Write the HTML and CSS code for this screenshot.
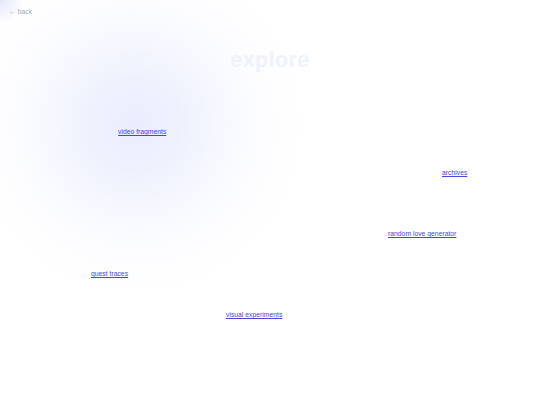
FILE: index.html
```html
<!DOCTYPE html>
<html>
<head>
<meta charset="utf-8">
<link rel="stylesheet" href="styles.css">
</head>
<body>
<div class="page">
  <div class="glow"></div>
  <div class="corner"></div>
  <a class="back" href="#">← back</a>
  <h1 class="title">explore</h1>
  <nav class="canvas">
    <a class="node n1" href="#">video fragments</a>
    <a class="node n2" href="#">archives</a>
    <a class="node n3" href="#">random love generator</a>
    <a class="node n4" href="#">guest traces</a>
    <a class="node n5" href="#">visual experiments</a>
  </nav>
</div>
</body>
</html>
```

FILE: styles.css
```css
html, body {
  margin: 0;
  padding: 0;
  background: #ffffff;
}
body {
  font-family: "Liberation Sans", Arial, sans-serif;
  width: 540px;
  height: 405px;
  overflow: hidden;
}
.page {
  position: relative;
  width: 540px;
  height: 405px;
}
.glow {
  position: absolute;
  left: -35px;
  top: -45px;
  width: 340px;
  height: 340px;
  border-radius: 50%;
  background: radial-gradient(closest-side, rgba(234,237,253,1) 0%, rgba(237,240,253,0.95) 25%, rgba(243,245,254,0.75) 50%, rgba(249,250,255,0.45) 75%, rgba(255,255,255,0) 100%);
}
.corner {
  position: absolute;
  left: -24px;
  top: -24px;
  width: 48px;
  height: 48px;
  border-radius: 50%;
  background: radial-gradient(closest-side, rgba(220,225,250,0.8) 0%, rgba(255,255,255,0) 100%);
}
.back {
  position: absolute;
  left: 9px;
  top: 8px;
  font-size: 6.8px;
  color: #a3a8b8;
  text-decoration: none;
}
.title {
  position: relative;
  margin: 0;
  padding-top: 47px;
  text-align: center;
  font-size: 21.5px;
  font-weight: bold;
  letter-spacing: 0.4px;
  line-height: 26px;
  color: #eef2fc;
}
.node {
  position: absolute;
  font-size: 6.8px;
  line-height: 8px;
  color: #4646dc;
  text-decoration: underline;
}
.n1 { left: 118px; top: 128px; }
.n2 { left: 442px; top: 169px; }
.n3 { left: 388px; top: 230px; }
.n4 { left: 91px; top: 270px; }
.n5 { left: 226px; top: 311px; }
```
